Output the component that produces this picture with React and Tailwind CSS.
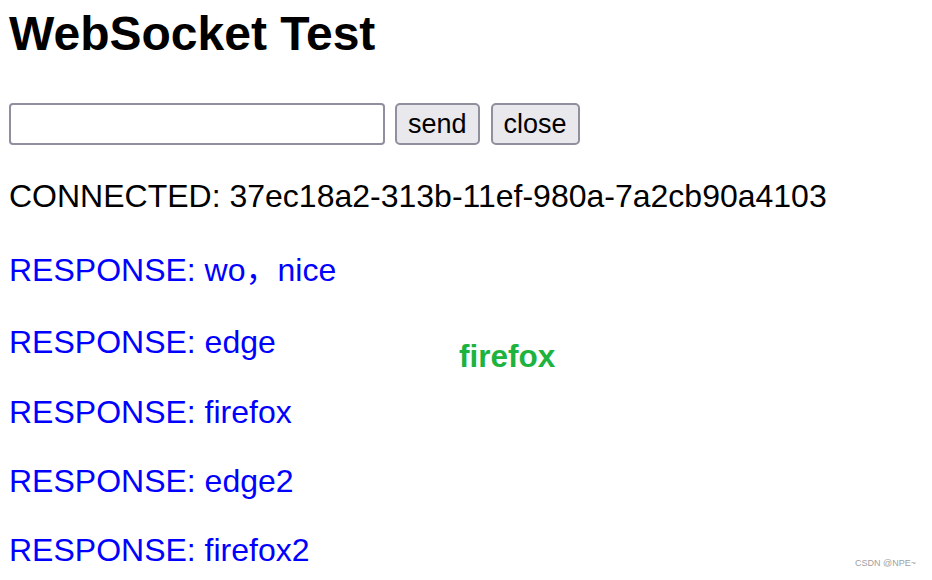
import React from "react";

const lines = [
  { text: "CONNECTED: 37ec18a2-313b-11ef-980a-7a2cb90a4103", cls: "mt-[35px] text-black" },
  { text: "RESPONSE: wo，nice", cls: "mt-[42px] text-[#0000ff]" },
  { text: "RESPONSE: edge", cls: "mt-[40px] text-[#0000ff]" },
  { text: "RESPONSE: firefox", cls: "mt-[38px] text-[#0000ff]" },
  { text: "RESPONSE: edge2", cls: "mt-[37px] text-[#0000ff]" },
  { text: "RESPONSE: firefox2", cls: "mt-[37px] text-[#0000ff]" },
];

export default function App() {
  return (
    <div
      className="relative w-[932px] h-[580px] overflow-hidden bg-white pl-[9px]"
      style={{ fontFamily: '"Liberation Sans", Arial, "Noto Sans CJK SC", sans-serif' }}
    >
      <h1 className="pt-[10px] text-[48px] leading-[48px] font-bold text-black">WebSocket Test</h1>
      <div className="mt-[45px] flex items-center">
        <input
          type="text"
          className="w-[376px] h-[42px] rounded-[4px] border-2 border-[#8f8f9d] bg-white outline-none"
        />
        <button className="ml-[10px] h-[42px] px-[11px] rounded-[5px] border-2 border-[#8f8f9d] bg-[#e9e9ed] text-[27px] leading-[27px] text-black">
          send
        </button>
        <button className="ml-[11px] h-[42px] px-[11px] rounded-[5px] border-2 border-[#8f8f9d] bg-[#e9e9ed] text-[27px] leading-[27px] text-black">
          close
        </button>
      </div>
      <div className="flex flex-col">
        {lines.map((l, i) => (
          <div key={i} className={"text-[32px] leading-[32px] whitespace-nowrap " + l.cls}>
            {l.text}
          </div>
        ))}
      </div>
      <div className="absolute left-[459px] top-[340px] text-[31.5px] leading-[32px] font-bold text-[#1db33f]">
        firefox
      </div>
      <div className="absolute left-[855px] top-[558px] text-[9px] leading-[10px] text-[#a0a0a0]">
        CSDN @NPE~
      </div>
    </div>
  );
}
